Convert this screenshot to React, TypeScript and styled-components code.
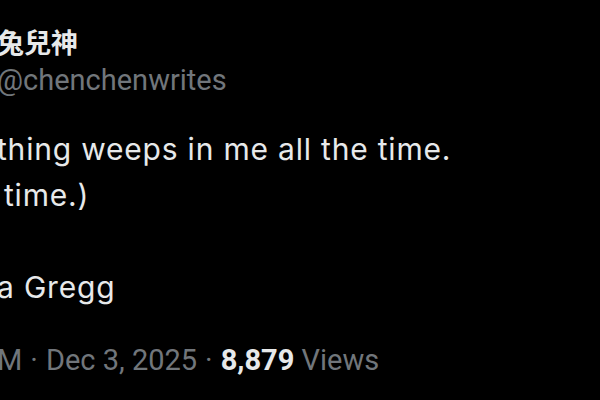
import React, { FC } from 'react';
import styled, { createGlobalStyle } from 'styled-components';

const GlobalStyle = createGlobalStyle`
  html, body {
    margin: 0;
    padding: 0;
    background: #000;
    overflow: hidden;
  }
`;

const StyledPage = styled.div`
  width: 600px;
  height: 400px;
  background: #000;
  overflow: hidden;
`;

const StyledTweet = styled.article`
  display: flex;
  flex-direction: column;
  margin-left: -3px;
  padding-top: 25px;
`;

const StyledHeader = styled.div`
  display: flex;
  flex-direction: column;
`;

const StyledName = styled.span`
  color: #e7e9ea;
  font-family: 'Noto Sans CJK TC', 'Noto Sans CJK SC', sans-serif;
  font-weight: 700;
  font-size: 27px;
  line-height: 34px;
`;

const StyledHandle = styled.span`
  color: #71767b;
  font-family: Roboto, 'Liberation Sans', sans-serif;
  font-size: 29px;
  line-height: 42px;
`;

const StyledBody = styled.div`
  margin-top: 25px;
  color: #e7e9ea;
  font-family: Inter, Roboto, sans-serif;
  font-size: 30px;
  letter-spacing: 0.8px;
  line-height: 46px;
`;

const StyledLine = styled.div<{ $indent?: number }>`
  padding-left: ${(p) => p.$indent ?? 0}px;
  min-height: 46px;
  white-space: pre;
`;

const StyledMeta = styled.div`
  margin-top: 31px;
  display: flex;
  align-items: baseline;
  gap: 8px;
  color: #71767b;
  font-family: Roboto, 'Liberation Sans', sans-serif;
  font-size: 29px;
  line-height: 38px;
  white-space: pre;
`;

const StyledCount = styled.span`
  color: #e7e9ea;
  font-weight: 700;
`;

interface TweetProps {
  name: string;
  handle: string;
  lines: string[];
  time: string;
  date: string;
  views: string;
}

const Tweet: FC<TweetProps> = ({ name, handle, lines, time, date, views }) => {
  return (
    <StyledTweet>
      <StyledHeader>
        <StyledName>{name}</StyledName>
        <StyledHandle>{handle}</StyledHandle>
      </StyledHeader>
      <StyledBody>
        {lines.map((line, index) => (
          <StyledLine key={index} $indent={index === 1 ? 7 : 0}>
            {line}
          </StyledLine>
        ))}
      </StyledBody>
      <StyledMeta>
        <span>{time}</span>
        <span>·</span>
        <span>{date}</span>
        <span>·</span>
        <span>
          <StyledCount>{views}</StyledCount> Views
        </span>
      </StyledMeta>
    </StyledTweet>
  );
};

const App: FC = () => {
  return (
    <StyledPage>
      <GlobalStyle />
      <Tweet
        name="兔兒神"
        handle="@chenchenwrites"
        lines={['thing weeps in me all the time.', 'time.)', '', 'a Gregg']}
        time="M"
        date="Dec 3, 2025"
        views="8,879"
      />
    </StyledPage>
  );
};

export default App;
